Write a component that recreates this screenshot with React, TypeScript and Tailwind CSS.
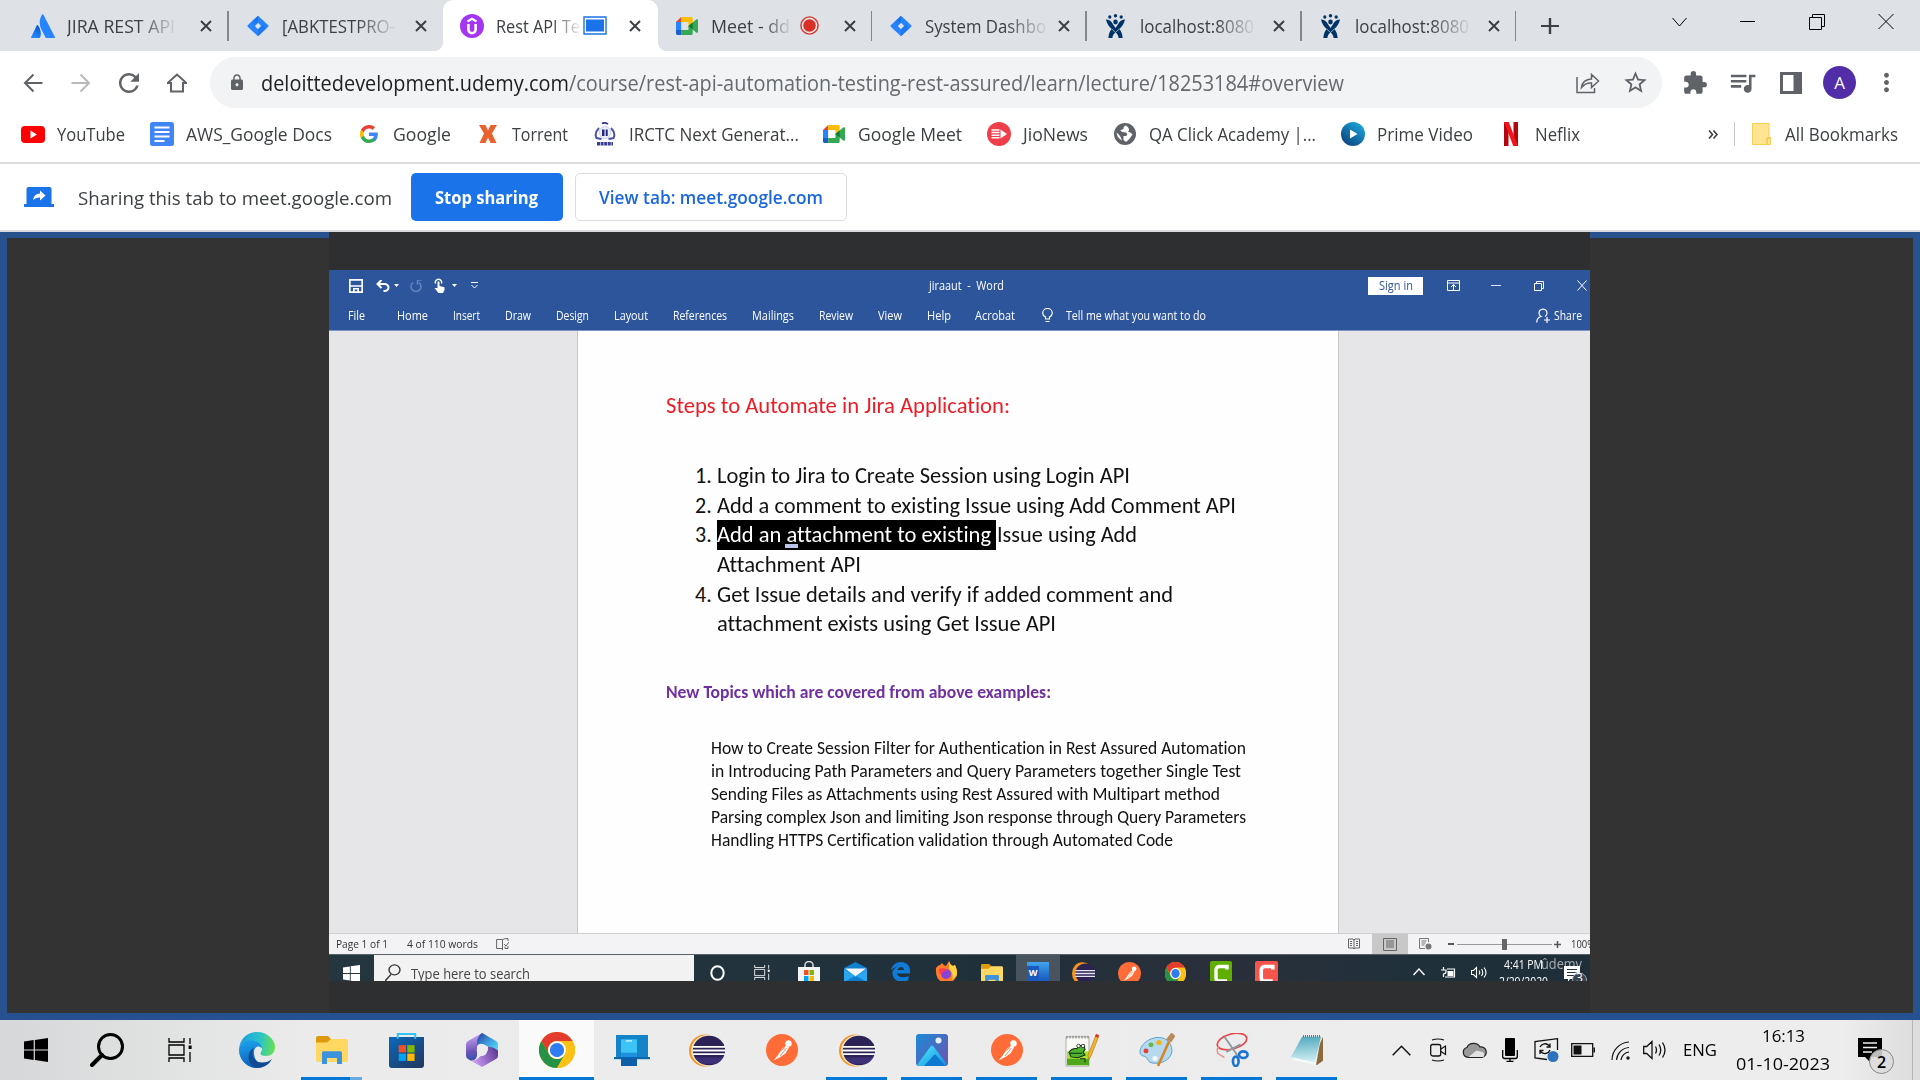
import React, { useLayoutEffect, useRef, ReactNode } from "react";
import { MdLock, MdExtension, MdQueueMusic, MdStarBorder, MdMoreVert, MdRefresh } from "react-icons/md";

type P = { className?: string };

/* Single-line label condensed or widened to fill the width its class gives it. */
function Fit({ className = "", children }: { className?: string; children: ReactNode }) {
  const outer = useRef<HTMLSpanElement>(null);
  const inner = useRef<HTMLSpanElement>(null);
  useLayoutEffect(() => {
    const o = outer.current, i = inner.current;
    if (!o || !i) return;
    i.style.transform = "none";
    const k = o.getBoundingClientRect().width / i.getBoundingClientRect().width;
    i.style.transform = `scaleX(${k})`;
  });
  return (
    <span ref={outer} className={"block shrink-0 whitespace-nowrap " + className}>
      <span ref={inner} className="inline-block origin-left">{children}</span>
    </span>
  );
}

const Svg = ({ className = "", box = "0 0 24 24", children }: { className?: string; box?: string; children: ReactNode }) => (
  <svg className={"block shrink-0 " + className} viewBox={box} fill="none" preserveAspectRatio="none">{children}</svg>
);

/* ---------- brand icons ---------- */
const Atlassian = ({ className }: P) => (
  <Svg className={className}>
    <defs><linearGradient id="atl" x1="11" y1="12" x2="4" y2="23" gradientUnits="userSpaceOnUse"><stop stopColor="#0052cc" /><stop offset="1" stopColor="#2684ff" /></linearGradient></defs>
    <path d="M7 11.4c-.4-.5-1-.4-1.300.100L.1 23.200c-.2.400.100.800.600.800h7.700c.3 0 .5-.1.600-.4 1.700-3.500.7-8.700-2-12.200Z" fill="url(#atl)" />
    <path d="M11.100.5C8 5.400 8.200 10.800 10.200 14.900l4.300 8.700c.1.200.4.400.7.400H23.400c.5 0 .8-.4.600-.8L12.300.5c-.3-.5-.9-.5-1.200 0Z" fill="#2684ff" />
  </Svg>
);
const JiraDiamond = ({ className }: P) => (
  <Svg className={className}>
    <defs><linearGradient id="jd" x1="12" y1="2" x2="5" y2="10" gradientUnits="userSpaceOnUse"><stop stopColor="#0052cc" /><stop offset="1" stopColor="#2684ff" /></linearGradient></defs>
    <path d="M12 .8 23.200 11.300c.4.400.4 1 0 1.400L12 23.200.800 12.700c-.4-.4-.4-1 0-1.400L12 .8Zm0 7.700L8.500 12l3.500 3.500 3.500-3.500L12 8.500Z" fill="#2684ff" fillRule="evenodd" />
    <path d="M12 .8v7.700L6.500 14 3.300 9Z" fill="url(#jd)" opacity=".5" />
    <path d="M12 23.200v-7.700l5.500-5.500 3.200 5Z" fill="#1a6fe8" opacity=".6" />
  </Svg>
);
const UdemyBadge = ({ className }: P) => (
  <Svg className={className}>
    <circle cx="12" cy="12" r="12" fill="#a435f0" />
    <path d="M7.500 7.500 12 4.800 16.500 7.500" stroke="#fff" strokeWidth="2.200" />
    <path d="M8.400 10v5.500a3.600 3.700 0 0 0 7.200 0V10" stroke="#fff" strokeWidth="2.600" />
  </Svg>
);
const MeetIcon = ({ className }: P) => (
  <Svg className={className} box="0 0 24 20">
    <path d="M0 5.500 5.600 0v5.500Z" fill="#ea4335" />
    <path d="M5.600 0H16.500c1 0 1.700.7 1.700 1.700V8l-4.600 3V5.500h-8Z" fill="#fbbc04" />
    <path d="M0 5.500h5.600v9H0Z" fill="#2684fc" />
    <path d="M0 14.500h5.600V20H1.700C.7 20 0 19.300 0 18.300Z" fill="#1a5fd0" />
    <path d="M5.600 14.500h8V10l4.600-2.500v10.800c0 1-.7 1.700-1.700 1.700H5.600Z" fill="#34a853" />
    <path d="m13.600 10 8.800-7.400c.6-.5 1.600-.1 1.600.7v13.400c0 .8-1 1.200-1.600.7Z" fill="#34a853" />
    <path d="m13.600 10 4.600-3.900v7.800Z" fill="#0f7a35" />
  </Svg>
);
const JiraPerson = ({ className }: P) => (
  <Svg className={className} box="0 0 20 24">
    <g fill="#003366">
      <circle cx="4" cy="3" r="1.700" /><circle cx="10" cy="1.800" r="1.800" /><circle cx="16" cy="3" r="1.700" />
      <path d="M0 5.600c3.500-.3 6 2 7.500 5l2.500 3.500 2.500-3.500c1.500-3 4-5.300 7.500-5-1 4.200-3.300 7.400-6 9.400 2 2 3.300 5 3.500 9h-4.200c-.2-2.600-1.500-4.500-3.300-5.500-1.800 1-3.100 2.900-3.300 5.500H2.500c.2-4 1.500-7 3.500-9-2.700-2-5-5.200-6-9.400Z" />
      <circle cx="10" cy="8" r="2.400" />
    </g>
    <path d="m6 15 4 3.500 4-3.500" stroke="#dee1e6" strokeWidth=".7" />
  </Svg>
);
const Chrome = ({ className }: P) => (
  <Svg className={className} box="0 0 48 48">
    <circle cx="24" cy="24" r="24" fill="#fbbc04" />
    <path d="M3.200 12A24 24 0 0 1 44.800 12H24A12 12 0 0 0 13.600 30Z" fill="#e33b2e" />
    <path d="M3.200 12A24 24 0 0 0 24 48L34.400 30A12 12 0 0 1 13.600 30Z" fill="#259245" />
    <path d="M44.800 12H24a12 12 0 0 1 10.400 18L24 48A24 24 0 0 0 44.800 12Z" fill="#fbc116" />
    <circle cx="24" cy="24" r="12" fill="#fff" /><circle cx="24" cy="24" r="9.500" fill="#2f7cf0" />
  </Svg>
);
const Eclipse = ({ className }: P) => (
  <Svg className={className} box="0 0 36 36">
    <ellipse cx="16" cy="18" rx="16" ry="17.500" fill="#f7941e" />
    <ellipse cx="20" cy="18" rx="18" ry="17.500" fill="#f3ead9" opacity=".9" clipPath="inset(0 16px 0 0)" />
    <circle cx="20" cy="18" r="16.200" fill="#2c2255" />
    <path d="M6 25.500h28.500a16 16 0 0 1-7 7H13Z" fill="#473788" opacity=".7" />
    <path d="M4 14H36M3.500 18h32.500M4 22H36" stroke="#fff" strokeWidth="2" />
  </Svg>
);
const DarkEclipse = ({ className }: P) => (
  <Svg className={className} box="0 0 36 36">
    <ellipse cx="16" cy="18" rx="16" ry="17.500" fill="#f7941e" />
    <circle cx="20.500" cy="18" r="15.500" fill="#2c2255" />
    <path d="M5 13.500H36M4.500 18h31.500M5 22.500H36" stroke="#e8e4f4" strokeWidth="2.200" />
  </Svg>
);
const Postman = ({ className }: P) => (
  <Svg className={className} box="0 0 32 32">
    <circle cx="16" cy="16" r="16" fill="#ff6c37" />
    <circle cx="22.500" cy="9.500" r="3.200" fill="#fff" />
    <path d="m20.500 11.500 2.500 2-3.500 6-5.200 3.500-6.800 3.500 4.200-5 4-6.500Z" fill="#fff" />
    <path d="m12 19 7-5.500M14 22l6.500-8" stroke="#ff6c37" strokeWidth=".8" />
  </Svg>
);
const Folder = ({ className }: P) => (
  <Svg className={className} box="0 0 32 28">
    <path d="M0 2c0-1 .6-2 2-2h10l3 3v5H0Z" fill="#dd9a0a" />
    <path d="M0 6.500h11L15 3h15c1 0 2 1 2 2v19c0 1-1 2-2 2H2c-1 0-2-1-2-2Z" fill="#ffd763" />
    <path d="M6 28V17c0-1 .7-1.700 1.700-1.700h16.600c1 0 1.700.7 1.700 1.700v11h-5v-6H11v6Z" fill="#3c93dc" />
  </Svg>
);
const Windows = ({ className }: P) => (
  <Svg className={className}><path d="M0 3.400 9.700 2.100v9.300H0ZM10.900 1.900 24 0v11.400H10.900ZM0 12.600h9.700v9.300L0 20.600ZM10.900 12.600H24V24l-13.100-1.900Z" fill="currentColor" /></Svg>
);
const TaskView = ({ className }: P) => (
  <Svg className={className} box="0 0 24 24">
    <path d="M1 0v4h15V0M1 7h15v10H1ZM1 24v-4h15v4M22 0v6M22 14v10" stroke="currentColor" strokeWidth="1.300" /><path d="M20.600 7.500h3v3.500h-3Z" fill="currentColor" />
  </Svg>
);
const EdgeIcon = ({ className }: P) => (
  <Svg className={className} box="0 0 36 36">
    <defs>
      <linearGradient id="eg1" x1="2" y1="10" x2="36" y2="14" gradientUnits="userSpaceOnUse"><stop stopColor="#1ba2e0" /><stop offset=".55" stopColor="#2bc4c9" /><stop offset="1" stopColor="#6be14b" /></linearGradient>
      <linearGradient id="eg2" x1="4" y1="12" x2="10" y2="36" gradientUnits="userSpaceOnUse"><stop stopColor="#1a9be8" /><stop offset="1" stopColor="#0a5fb8" /></linearGradient>
    </defs>
    <path d="M0 17C1 7 8 0 18 0c11 0 18 8 18 15 0 6-4 9-9 9-4 0-6-1.500-5.500-3 .5-1.200 1.500-2 1.500-4 0-5-5-8-10.500-8C6 9 1 12 0 17Z" fill="url(#eg1)" />
    <path d="M0 18c0-5 5-9.500 12-9.500 6 0 10.500 3 11 7.500-4-3.500-8-1-8 4.500S18 32 24 34c-1.500 1.200-4 2-6 2A18 18 0 0 1 0 18Z" fill="url(#eg2)" />
    <path d="M15 15.500c-4 8 1 15 8 15 4 0 7.500-1 10-3.500-3 6-9 9-15 9C9 34 6 21 15 15.500Z" fill="#114a92" />
  </Svg>
);
const StoreIcon = ({ className }: P) => (
  <Svg className={className} box="0 0 36 36">
    <defs><linearGradient id="st" x1="6" y1="4" x2="30" y2="36" gradientUnits="userSpaceOnUse"><stop stopColor="#0b65b3" /><stop offset="1" stopColor="#233a63" /></linearGradient></defs>
    <path d="M0 4h36v29a3 3 0 0 1-3 3H3a3 3 0 0 1-3-3Z" fill="url(#st)" />
    <path d="M9 6V1h18v5" stroke="#2fc6f5" strokeWidth="2" />
    <path d="M10 12.500h7.500v7.500H10Z" fill="#f25022" /><path d="M18.800 12.500h7.500v7.500h-7.500Z" fill="#7fba00" /><path d="M10 21.200h7.500v7.500H10Z" fill="#00a4ef" /><path d="M18.800 21.200h7.500v7.500h-7.500Z" fill="#ffb900" />
  </Svg>
);
const M365 = ({ className }: P) => (
  <Svg className={className} box="0 0 32 36">
    <defs>
      <linearGradient id="m1" x1="3" y1="4" x2="8" y2="30" gradientUnits="userSpaceOnUse"><stop stopColor="#c39af0" /><stop offset=".6" stopColor="#6a55b5" /><stop offset="1" stopColor="#2b53b0" /></linearGradient>
      <linearGradient id="m2" x1="12" y1="3" x2="30" y2="20" gradientUnits="userSpaceOnUse"><stop stopColor="#2a4aa8" /><stop offset=".5" stopColor="#3d9fe0" /><stop offset="1" stopColor="#55e0f5" /></linearGradient>
      <linearGradient id="m3" x1="8" y1="32" x2="32" y2="20" gradientUnits="userSpaceOnUse"><stop stopColor="#cf9bf5" /><stop offset="1" stopColor="#5b3a94" /></linearGradient>
    </defs>
    <path d="M16 0 2 8.500Q0 9.700 0 12v12q0 2.300 2 3.500L5 29.500q6-1 6-6V12Q12 5 20 2Z" fill="url(#m1)" />
    <path d="m16 0 14 8.500Q32 9.700 32 12v11q-3-4-8-7-4-3.500-9-4.500-3 0-4 3V9Q12 3 16 0Z" fill="url(#m2)" />
    <path d="M32 19v5q0 2.300-2 3.500L16 36 5 29.500q6 0 9-4.500 9-3 8-10.500 8 1 10 4.500Z" fill="url(#m3)" />
    <ellipse cx="16" cy="18" rx="5.300" ry="6.300" fill="#ececec" />
  </Svg>
);
const PhoneLink = ({ className }: P) => (
  <Svg className={className} box="0 0 36 36">
    <path d="M2 1h32v26h2v1.500H0V27h2Z" fill="#1583c7" /><path d="M0 26h36v2H0Z" fill="#0f69a8" />
    <path d="M7 6h16v21H7Z" fill="#3cc4f5" /><path d="M7 22h16v14H7Z" fill="#0c5fa8" /><path d="M7 21h16v5H7Z" fill="#1f8fe0" /><path d="M12 7h6v1.500h-6Z" fill="#d4f2ff" />
  </Svg>
);
const Photos = ({ className }: P) => (
  <Svg className={className} box="0 0 32 32">
    <defs>
      <linearGradient id="ph" x1="0" y1="0" x2="32" y2="28" gradientUnits="userSpaceOnUse"><stop stopColor="#1b8ad8" /><stop offset="1" stopColor="#6b55b0" /></linearGradient>
      <linearGradient id="ph2" x1="14" y1="13" x2="28" y2="32" gradientUnits="userSpaceOnUse"><stop stopColor="#3fd3f8" /><stop offset="1" stopColor="#1690dd" /></linearGradient>
    </defs>
    <rect width="32" height="32" rx="3" fill="url(#ph)" /><circle cx="22.500" cy="6.500" r="3" fill="#e6f0fa" />
    <path d="M1 31 14.500 12.500q1.500-2 3 0L31 30q-1 2-3 2H3Z" fill="url(#ph2)" /><path d="m8 32 10-11q1-1 2 0l9 11Z" fill="#0e78d0" />
  </Svg>
);
const NotepadPP = ({ className }: P) => (
  <Svg className={className} box="0 0 34 36">
    <path d="M1 3h23v32H1Z" fill="#f8f8f5" stroke="#aaa" />
    <path d="M2 19h22v15H2Z" fill="#a8e02a" /><path d="M2 27h22v7H2Z" fill="#4fa81c" />
    <path d="M2 2v3M5 2v3M8 2v3M11 2v3M14 2v3M17 2v3M20 2v3M23 2v3" stroke="#777" />
    <path d="M4 20q3-5 8-4l2-4 3 1 2-1 1 5-2 3 2 3-7 3-7-1Z" fill="#4db52c" stroke="#162a10" strokeWidth="1.100" /><circle cx="13.500" cy="13" r="1.800" fill="#fff" stroke="#000" strokeWidth=".7" /><circle cx="18" cy="13" r="1.800" fill="#fff" stroke="#000" strokeWidth=".7" />
    <path d="M5 21h12M15 27h5v4" stroke="#123" /><path d="m31 1 3 1-8 22-2 4-1-5Z" fill="#f4b52a" stroke="#a66a12" strokeWidth=".6" /><path d="m31 0 3 1-1 3-3-1Z" fill="#d33" />
  </Svg>
);
const Paint = ({ className }: P) => (
  <Svg className={className} box="0 0 36 36">
    <path d="M16 5C7 7 1 14 1 20c0 4 3 4 5 5 3 1 2 4 5 6 6 3 21 0 22-12C33 9 25 3 16 5Z" fill="#b5daf0" stroke="#5c9fc8" />
    <circle cx="7" cy="19" r="2.500" fill="#e83f38" /><circle cx="12" cy="12.500" r="2.500" fill="#63b944" /><circle cx="20" cy="10" r="2.700" fill="#f2b21c" /><circle cx="16" cy="27" r="2.600" fill="#f4f8fb" />
    <path d="M19 35 30 9" stroke="#d98323" strokeWidth="2.600" /><path d="m27 7 5-7q4 1 4 4l-4 6Z" fill="#b98b5c" />
  </Svg>
);
const Snip = ({ className }: P) => (
  <Svg className={className} box="0 0 36 36">
    <ellipse cx="18" cy="9" rx="16" ry="8" transform="rotate(-15 18 9)" stroke="#e8474b" strokeWidth="1.800" />
    <path d="M4 14q-4 6 1 9l5 3" stroke="#ef8d8d" strokeWidth="1.500" />
    <path d="m10 4 14 20M27 12 12 20" stroke="#8d99a3" strokeWidth="2" />
    <ellipse cx="30" cy="23" rx="4.500" ry="3.500" stroke="#1d74d0" strokeWidth="2.800" /><ellipse cx="22" cy="30" rx="3" ry="5" stroke="#1d74d0" strokeWidth="2.800" />
  </Svg>
);
const Notepad = ({ className }: P) => (
  <Svg className={className} box="0 0 32 36">
    <defs><linearGradient id="np" x1="14" y1="2" x2="16" y2="32" gradientUnits="userSpaceOnUse"><stop stopColor="#4fa9bd" /><stop offset="1" stopColor="#d5f0f6" /></linearGradient></defs>
    <path d="M32 3v27l-6 5-6-2Z" fill="#8b6b3c" /><path d="M30 3 25 35 1 29Z" fill="#f5fafa" />
    <path d="M11 3h19l-6 29-24-6Z" fill="url(#np)" /><path d="M12 2.500h18" stroke="#777" strokeWidth="3" strokeDasharray="1 1" />
  </Svg>
);

/* ---------- tab strip ---------- */
const Cross = () => <Svg className="w-3 h-3" box="0 0 12 12"><path d="m1 1 10 10M11 1 1 11" stroke="#3c4043" strokeWidth="2" /></Svg>;

const tabs: { icon: ReactNode; label: string; w: string; badge?: ReactNode; active?: boolean; line?: boolean }[] = [
  { icon: <Atlassian className="w-6 h-6" />, label: "JIRA REST API", w: "w-[108px]", line: true },
  { icon: <JiraDiamond className="w-[22px] h-[22px]" />, label: "[ABKTESTPRO-", w: "w-[113px]" },
  {
    icon: <UdemyBadge className="w-6 h-6" />, label: "Rest API Te", w: "w-[84px]", active: true,
    badge: <Svg className="ml-[3px] w-6 h-[19px]" box="0 0 24 19"><path d="M1 1h22v17H1Z" stroke="#1a73e8" strokeWidth="1.400" /><path d="M3 3.500h18v12H3Z" fill="#1a73e8" /></Svg>,
  },
  {
    icon: <MeetIcon className="w-[22px] h-[18px]" />, label: "Meet - dd", w: "w-[79px]", line: true,
    badge: <Svg className="ml-[10px] w-[19px] h-[19px]" box="0 0 19 19"><circle cx="9.500" cy="9.500" r="8.600" stroke="#d93025" strokeWidth="1.400" /><circle cx="9.500" cy="9.500" r="6.200" fill="#d93025" /></Svg>,
  },
  { icon: <JiraDiamond className="w-[22px] h-[22px]" />, label: "System Dashbo", w: "w-[121px]", line: true },
  { icon: <JiraPerson className="w-[19px] h-6" />, label: "localhost:8080", w: "w-[114px]", line: true },
  { icon: <JiraPerson className="w-[19px] h-6" />, label: "localhost:8080", w: "w-[114px]", line: true },
];

function TabStrip() {
  return (
    <div className="flex h-[51px] shrink-0 bg-[#dee1e6] pl-[14px] text-[#3c4043]">
      {tabs.map((t, i) => (
        <div key={i} className={"relative flex h-full w-[214.6px] shrink-0 items-center " + (t.active ? "rounded-t-[10px] bg-white" : "")}>
          {t.active && (
            <>
              <span className="absolute -left-2 bottom-0 h-2 w-2 bg-[radial-gradient(circle_at_0_0,transparent_7.5px,white_8px)]" />
              <span className="absolute -right-2 bottom-0 h-2 w-2 bg-[radial-gradient(circle_at_100%_0,transparent_7.5px,white_8px)]" />
            </>
          )}
          <span className="ml-[17px] flex w-6 justify-center">{t.icon}</span>
          <div className="ml-3 flex w-[113px] items-center">
            <Fit className={t.w + " text-[18px] leading-6 [mask-image:linear-gradient(to_right,black_66%,transparent_103%)]"}>{t.label}</Fit>
            {t.badge}
          </div>
          <span className="ml-5"><Cross /></span>
          {t.line && <span className="ml-auto h-[30px] w-[1.500px] bg-[#84878b]" />}
        </div>
      ))}
      <div className="ml-[24px] flex w-5 items-center"><Svg className="h-[18px] w-5" box="0 0 20 20"><path d="M10 1v18M1 10h18" stroke="#3c4043" strokeWidth="2.400" /></Svg></div>
      <div className="ml-[112px] flex h-[43px] items-center text-black">
        <Svg className="h-[10px] w-[15px]" box="0 0 15 10"><path d="m.5 1 7 8 7-8" stroke="currentColor" /></Svg>
        <span className="ml-[53px] h-px w-[15px] bg-black" />
        <Svg className="ml-[54px] h-4 w-4" box="0 0 16 16"><path d="M.5 3.500h12v12H.5ZM3.500 3.500v-3h12v12h-3" stroke="currentColor" /></Svg>
        <Svg className="ml-[53px] h-[15px] w-4" box="0 0 16 15"><path d="m.5 0 15 15M15.500 0l-15 15" stroke="currentColor" /></Svg>
      </div>
    </div>
  );
}

/* ---------- address bar ---------- */
function AddressBar() {
  return (
    <div className="flex h-[63px] shrink-0 items-center pl-[23px] text-[#5f6368]">
      <Svg className="h-5 w-5" box="0 0 20 20"><path d="M19.500 10H2M10.500 1.500 2 10l8.500 8.500" stroke="currentColor" strokeWidth="2" /></Svg>
      <Svg className="ml-[28px] h-5 w-5 text-[#b8babd]" box="0 0 20 20"><path d="M.5 10H18M9.500 1.500 18 10l-8.500 8.500" stroke="currentColor" strokeWidth="2" /></Svg>
      <MdRefresh className="ml-[23px] h-[30px] w-[30px]" />
      <Svg className="ml-[23px] h-5 w-5" box="0 0 20 20"><path d="M0.700 10 10 1.500 19.300 10H16v8.500H4V10Z" stroke="currentColor" strokeWidth="2" /></Svg>
      <div className="ml-[23px] flex h-[51px] w-[1452px] shrink-0 items-center rounded-full bg-[#f1f3f4] pl-[18px]">
        <MdLock className="h-[19px] w-[18px]" />
        <Fit className="ml-[15px] w-[1083px] text-[21px] leading-7 text-[#66696d]"><span className="text-[#202124]">deloittedevelopment.udemy.com</span>/course/rest-api-automation-testing-rest-assured/learn/lecture/18253184#overview</Fit>
        <Svg className="ml-[232px] h-[22px] w-6" box="0 0 24 22"><path d="M1 5v15.500h17.500v-4.500M5.500 15.500q1-8 10-8.500V2.500L22.500 9l-7 6.500V11q-6-.5-10 4.500Z" stroke="currentColor" strokeWidth="1.500" /></Svg>
        <MdStarBorder className="ml-[22px] h-[27px] w-[27px]" />
      </div>
      <MdExtension className="ml-[20px] h-[26px] w-[26px]" />
      <MdQueueMusic className="ml-[19px] h-[31px] w-[31px]" />
      <Svg className="ml-[22px] h-[22px] w-[22px]" box="0 0 22 22"><path d="M1.500 1.500h19v19h-19Z" stroke="currentColor" strokeWidth="3" /><path d="M13.500 1h7v20h-7Z" fill="currentColor" /></Svg>
      <span className="ml-[21px] flex h-[33px] w-[33px] items-center justify-center rounded-full bg-[#512da8] text-[17px] text-white">A</span>
      <MdMoreVert className="ml-[16px] h-[29px] w-[29px]" />
    </div>
  );
}

/* ---------- bookmarks ---------- */
function Mark({ icon, w, ml, children }: { icon: ReactNode; w: string; ml: string; children: string }) {
  return (
    <div className={"flex shrink-0 items-center " + ml}>
      <span className="flex w-6 justify-center">{icon}</span>
      <Fit className={"ml-3 text-[18px] leading-6 " + w}>{children}</Fit>
    </div>
  );
}

function Bookmarks() {
  return (
    <div className="flex h-[50px] shrink-0 items-center border-b-2 border-[#dadada] pb-[8px] text-[#3c4043]">
      <Mark ml="ml-[21px]" w="w-[68px]" icon={<Svg className="h-[17px] w-6" box="0 0 24 17"><rect width="24" height="17" rx="4" fill="#f00" /><path d="m9.500 4.500 6.500 4-6.500 4Z" fill="#fff" /></Svg>}>YouTube</Mark>
      <Mark ml="ml-[25px]" w="w-[146px]" icon={<Svg className="h-6 w-6"><rect width="24" height="24" rx="2.500" fill="#4285f4" /><path d="M4.500 5.500h15M4.500 10h15M4.500 14.500h15M4.500 19h10" stroke="#fff" strokeWidth="2" /></Svg>}>AWS_Google Docs</Mark>
      <Mark ml="ml-[25px]" w="w-[58px]" icon={
        <Svg className="h-[18px] w-[18px]" box="2 2 20 20"><path d="M21.800 12.200c0-.7-.1-1.400-.2-2H12v3.900h5.500a4.700 4.700 0 0 1-2 3.100v2.600h3.300c1.900-1.800 3-4.400 3-7.600Z" fill="#4285f4" /><path d="M12 22c2.700 0 5-.9 6.800-2.400l-3.300-2.600c-.9.600-2 1-3.500 1a6 6 0 0 1-5.600-4.100H3v2.600A10 10 0 0 0 12 22Z" fill="#34a853" /><path d="M6.400 13.900a6 6 0 0 1 0-3.800V7.500H3a10 10 0 0 0 0 9Z" fill="#fbbc05" /><path d="M12 6c1.500 0 2.800.5 3.800 1.500l2.900-2.900A10 10 0 0 0 3 7.500l3.400 2.600A6 6 0 0 1 12 6Z" fill="#ea4335" /></Svg>}>Google</Mark>
      <Mark ml="ml-[25px]" w="w-[56px]" icon={<Svg className="h-[18px] w-[18px]" box="0 0 18 18"><path d="M0 0h6.500L9 5.500 11.500 0H18l-5 8.500 4.500 9.500h-6L9 12.500 6.500 18h-6L5 8.500Z" fill="#e8622e" /></Svg>}>Torrent</Mark>
      <Mark ml="ml-[25px]" w="w-[170px]" icon={<Svg className="h-6 w-[22px]" box="0 0 22 24"><path d="M8 1.500q3-1.500 6 .5" stroke="#30398f" strokeWidth="1.800" /><path d="M5 6Q0 11 2.500 16l5 1M17 6q5 5 2.500 10l-5 1" stroke="#4a55a8" strokeWidth="2" /><ellipse cx="11" cy="10.500" rx="5.500" ry="6" fill="#eef0fa" stroke="#c9cdec" /><path d="M8 7.500h2.500v6.500H8ZM11.700 7.500h2v6.500h-2Z" fill="#22277f" /><path d="M3 21.800h16" stroke="#3a3f93" strokeWidth="3.400" strokeDasharray="3 .6" /></Svg>}>IRCTC Next Generat...</Mark>
      <Mark ml="ml-[23px]" w="w-[104px]" icon={<MeetIcon className="h-[18px] w-[22px]" />}>Google Meet</Mark>
      <Mark ml="ml-[25px]" w="w-[65px]" icon={<Svg className="h-6 w-6"><circle cx="12" cy="12" r="12" fill="#ef3f4a" /><path d="M4.500 8h8M4.500 10.600h8M4.500 13.200h8M4.500 15.800h8" stroke="#fff" strokeWidth="1.500" /><path d="m13.500 7.500 6.500 4.500-6.500 4.500Z" fill="#fff" /></Svg>}>JioNews</Mark>
      <Mark ml="ml-[25px]" w="w-[167px]" icon={<Svg className="h-[22px] w-[22px]" box="0 0 22 22"><circle cx="11" cy="11" r="11" fill="#5f6368" /><path d="M12 2.500q-3 1-2.500 3.500L6 7.500q2 2 6 2 2.500 2 0 3.500H9.500v4L12 19q4-3 6.500-7.500-2-3-4.500-2.500 3-3-2-6.500ZM2.500 9.500Q3 15 8 17.500 7 13 2.500 9.500Z" fill="#fff" /></Svg>}>QA Click Academy |...</Mark>
      <Mark ml="ml-[25px]" w="w-[96px]" icon={<Svg className="h-6 w-6"><defs><linearGradient id="pv" x1="18" y1="2" x2="4" y2="20" gradientUnits="userSpaceOnUse"><stop stopColor="#1a9fd4" /><stop offset="1" stopColor="#0d4b85" /></linearGradient></defs><circle cx="12" cy="12" r="12" fill="url(#pv)" /><path d="m9 7.500 7.500 4.500L9 16.500Z" fill="#fff" /></Svg>}>Prime Video</Mark>
      <Mark ml="ml-[26px]" w="w-[45px]" icon={<Svg className="h-6 w-[14px]" box="0 0 14 24"><path d="M0 0h4.500v24H0ZM9.500 0H14v24H9.500Z" fill="#b1060f" /><path d="M0 0h4.700L14 24H9.300Z" fill="#f0141e" /></Svg>}>Neflix</Mark>
      <Svg className="ml-[128px] h-[9px] w-[10px]" box="0 0 10 9"><path d="m1 .5 3.500 4L1 8.500M5.500.5l3.500 4-3.500 4" stroke="#3c4043" strokeWidth="1.600" /></Svg>
      <span className="ml-4 h-6 w-px bg-[#c6c8ca]" />
      <Mark ml="ml-[14px]" w="w-[113px]" icon={<Svg className="h-[22px] w-[19px]" box="0 0 19 22"><path d="M.5.500h16.500v14H18.500v7H.5Z" fill="#ffe591" stroke="#f6cf52" /><path d="M15 21v-6h3" stroke="#ebb92c" /></Svg>}>All Bookmarks</Mark>
    </div>
  );
}

function SharingBar() {
  return (
    <div className="flex h-[68px] shrink-0 items-center border-b-2 border-[#dadce0] pl-[24px]">
      <Svg className="h-5 w-[30px]" box="0 0 30 20"><path d="M2.500 2q0-2 2-2h21q2 0 2 2v15H30v3H0v-3h2.500Z" fill="#1a73e8" /><path d="M9 13q1-6.500 7-6.500V3.500l5.500 5-5.500 5v-3q-4-.5-7 2.500Z" fill="#fff" /></Svg>
      <Fit className="ml-[24px] mt-[2px] w-[314px] text-[19px] leading-7 text-[#3c4043]">Sharing this tab to meet.google.com</Fit>
      <button className="ml-[19px] flex h-[48px] w-[152px] items-center justify-center rounded-[5px] bg-[#1a73e8] pr-[2px] text-[18px] font-bold text-white"><Fit className="w-[103px]">Stop sharing</Fit></button>
      <button className="ml-[12px] flex h-[48px] w-[272px] items-center justify-center rounded-[5px] border border-[#dadce0] text-[18px] font-semibold text-[#1a66dc]"><Fit className="w-[224px]">View tab: meet.google.com</Fit></button>
    </div>
  );
}

/* ---------- Word window in the shared lecture ---------- */
const ribbon: [string, string, string][] = [
  ["File", "ml-[19px]", "w-[17px]"], ["Home", "ml-[32px]", "w-[31px]"], ["Insert", "ml-[25px]", "w-[27px]"],
  ["Draw", "ml-[25px]", "w-[26px]"], ["Design", "ml-[25px]", "w-[33px]"], ["Layout", "ml-[25px]", "w-[34px]"],
  ["References", "ml-[25px]", "w-[54px]"], ["Mailings", "ml-[25px]", "w-[42px]"], ["Review", "ml-[25px]", "w-[34px]"],
  ["View", "ml-[25px]", "w-[24px]"], ["Help", "ml-[25px]", "w-[24px]"], ["Acrobat", "ml-[24px]", "w-[40px]"],
];

const Caret = ({ className }: P) => <Svg className={"h-[3px] w-[5px] " + className} box="0 0 5 3"><path d="M0 0h5L2.500 3Z" fill="currentColor" /></Svg>;

function WordHeader() {
  return (
    <div className="h-[61px] shrink-0 border-b border-[#7c95c4] bg-[#2d559b] text-[12px] font-medium leading-4 text-white">
      <div className="flex h-[31px] items-center pl-5">
        <Svg className="mt-[1px] h-[14px] w-[14px]" box="0 0 13 13"><path d="M.8.800h11.400v11.400H.8Z" stroke="#fff" strokeWidth="1.500" /><path d="M1 6.500h11M4.500 12.500V9h4v3.500" stroke="#fff" strokeWidth="1.500" /></Svg>
        <Svg className="ml-[13px] h-3 w-[14px]" box="0 0 14 12"><path d="M5.500 0 1.500 4l4 4M2 4h6.500a4 3.500 0 0 1 0 7H7.500" stroke="#fff" strokeWidth="2" /></Svg>
        <Caret className="ml-[4px]" />
        <Svg className="ml-[11px] h-3 w-3" box="0 0 12 12"><path d="M3 2.500a5 5 0 1 0 6 0M11.500 0H7.500v4.500" stroke="#6685bd" strokeWidth="1.500" /></Svg>
        <Svg className="ml-[12px] h-[15px] w-[11px]" box="0 0 11 15"><path d="M1.500 5.500a3.200 3.200 0 1 1 6 0" stroke="#fff" strokeWidth="1.500" /><path d="M3.500 4q1-1.500 2 0v4l5 1.200V12l-1.500 3H4.500L.5 10h3Z" fill="#fff" /></Svg>
        <Caret className="ml-[7px]" />
        <Svg className="ml-[14px] h-[7px] w-[7px]" box="0 0 7 7"><path d="M0 .5h7M.5 3l3 3 3-3" stroke="#fff" /></Svg>
        <Fit className="ml-[451px] w-[75px]">jiraaut&nbsp; -&nbsp; Word</Fit>
        <span className="ml-[364px] flex h-[18px] w-[55px] items-center justify-center bg-white text-[#2d559b]"><Fit className="w-[34px]">Sign in</Fit></span>
        <Svg className="ml-[24px] h-[11px] w-[13px]" box="0 0 13 11"><path d="M.5.500h12v10H.5ZM.5 3h12M6.500 10V4.500M4 7l2.500-2.500L9 7" stroke="#fff" /></Svg>
        <span className="ml-[31px] h-[1.500px] w-[10px] bg-[#dce4f2]" />
        <Svg className="ml-[33px] h-[10px] w-[10px]" box="0 0 10 10"><path d="M.5 2.500h7v7h-7ZM2.500 2V.5h7v7H8" stroke="#fff" /></Svg>
        <Svg className="ml-[33px] h-[11px] w-[10px]" box="0 0 10 11"><path d="m.5.500 9 10M9.500.500l-9 10" stroke="#fff" /></Svg>
      </div>
      <div className="flex h-[29px] items-center">
        {ribbon.map(([name, ml, w]) => <Fit key={name} className={ml + " " + w}>{name}</Fit>)}
        <Svg className="ml-[27px] h-[15px] w-[11px]" box="0 0 11 15"><path d="M3.500 11V9Q.7 7.500.7 5a4.800 4.500 0 0 1 9.600 0q0 2.500-2.800 4v2ZM3.500 13.500h4" stroke="#fff" strokeWidth="1.200" /></Svg>
        <Fit className="ml-[13px] w-[140px]">Tell me what you want to do</Fit>
        <Svg className="ml-[330px] h-[15px] w-[14px]" box="0 0 14 15"><path d="M.7 14.500Q1 9.500 5 8.500a4 4 0 1 1 4 0M8 12h6M11 9v6" stroke="#fff" strokeWidth="1.200" /></Svg>
        <Fit className="ml-1 w-[28px]">Share</Fit>
      </div>
    </div>
  );
}

const Step = ({ n, w, children }: { n?: string; w: string; children: ReactNode }) => (
  <div className="flex h-[29.600px] items-center">
    <span className="w-[22px] shrink-0">{n}</span>
    <Fit className={w}>{children}</Fit>
  </div>
);

function Page() {
  return (
    <div className="h-[602px] w-[762px] border-x border-[#c9c9cb] bg-[#fefefe] pl-[88px] pt-[62px] font-[Carlito,Lato,sans-serif] text-[#111] [font-variant-ligatures:none]">
      <Fit className="h-[26px] w-[344px] text-[22px] leading-[26px] text-[#ee1c25]">Steps to Automate in Jira Application:</Fit>
      <div className="mt-[42px] pl-[29px] text-[22px] leading-[29px]">
        <Step n="1." w="w-[413px]">Login to Jira to Create Session using Login API</Step>
        <Step n="2." w="w-[519px]">Add a comment to existing Issue using Add Comment API</Step>
        <div className="flex h-[29.600px] items-center">
          <span className="w-[22px] shrink-0">3.</span>
          <div className="relative h-[29.600px] w-[279px] shrink-0 bg-black text-white">
            <Fit className="w-[274px]">Add an attachment to existing</Fit>
            <span className="absolute bottom-[2px] left-[68px] h-1 w-[13px] bg-[#b9c6ea]" />
          </div>
          <Fit className="ml-px w-[140px]">Issue using Add</Fit>
        </div>
        <Step w="w-[144px]">Attachment API</Step>
        <Step n="4." w="w-[456px]">Get Issue details and verify if added comment and</Step>
        <Step w="w-[339px]">attachment exists using Get Issue API</Step>
      </div>
      <Fit className="mt-[41px] h-6 w-[385px] text-[17.500px] font-bold leading-6 text-[#7030a0]">New Topics which are covered from above examples:</Fit>
      <div className="mt-[33px] pl-[45px] text-[17.500px] leading-[23px]">
        <Fit className="w-[535px]">How to Create Session Filter for Authentication in Rest Assured Automation</Fit>
        <Fit className="w-[530px]">in Introducing Path Parameters and Query Parameters together Single Test</Fit>
        <Fit className="w-[509px]">Sending Files as Attachments using Rest Assured with Multipart method</Fit>
        <Fit className="w-[535px]">Parsing complex Json and limiting Json response through Query Parameters</Fit>
        <Fit className="w-[462px]">Handling HTTPS Certification validation through Automated Code</Fit>
      </div>
    </div>
  );
}

function StatusBar() {
  return (
    <div className="flex h-[21px] shrink-0 items-center overflow-hidden border-t border-[#cfcfd1] bg-[#f3f2f4] pl-[7px] text-[11.500px] leading-4 text-[#333]">
      <Fit className="w-[52px]">Page 1 of 1</Fit>
      <Fit className="ml-[19px] w-[71px]">4 of 110 words</Fit>
      <Svg className="ml-[18px] h-3 w-[13px]" box="0 0 13 12"><path d="M6.500 1.500H.6v9H6.500M6.500 12V1.500q2-1 5.500-1V3M8 6l2 2 3-4M9 8.500v2h3V8" stroke="#666" /></Svg>
      <Svg className="ml-[839px] h-3 w-3" box="0 0 12 12"><path d="M.5 1H5l1 1 1-1h4.500v9H7l-1 1-1-1H.5ZM6 2v9M2 3.500h2M2 5.500h2M2 7.500h2M8 3.500h2M8 5.500h2M8 7.500h2" stroke="#666" /></Svg>
      <span className="ml-3 flex h-5 w-[36px] shrink-0 items-center justify-center bg-[#c8c8c9]"><Svg className="h-[13px] w-[14px]" box="0 0 14 13"><path d="M.5.500h13v12H.5ZM3 3h8M3 5h8M3 7h8M3 9h8" stroke="#666" /></Svg></span>
      <Svg className="ml-[11px] h-3 w-[13px]" box="0 0 13 12"><path d="M6 10.500H.5V.5h9V4M2.500 3h5M2.500 5h4M2.500 7h3" stroke="#777" /><circle cx="9.500" cy="8.500" r="3" fill="#777" /></Svg>
      <span className="ml-[16px] h-[2px] w-[6px] shrink-0 bg-[#555]" />
      <span className="ml-[3px] h-px w-[45px] shrink-0 bg-[#999]" /><span className="h-[11px] w-[5px] shrink-0 bg-[#666]" /><span className="h-px w-[45px] shrink-0 bg-[#999]" />
      <Svg className="ml-[2px] h-[7px] w-[7px]" box="0 0 7 7"><path d="M3.500 0v7M0 3.500h7" stroke="#555" strokeWidth="1.500" /></Svg>
      <Fit className="ml-[10px] w-[24px]">100%</Fit>
    </div>
  );
}

const Camtasia = ({ className }: P) => (
  <Svg className={className} box="0 0 22 22"><rect width="22" height="24" rx="2" fill="currentColor" /><path d="M17 8.500V5.500H9.500Q6 5.500 6 9v8q0 3 3 3h8" stroke="#fff" strokeWidth="3.400" /></Svg>
);

function InnerTaskbar() {
  return (
    <div className="flex h-[27px] shrink-0 items-start overflow-hidden border-t border-[#55626c] bg-[linear-gradient(90deg,#243640,#20303b_55%,#2a2f3a_70%,#20303b_85%,#1f2f3a)] text-white">
      <div className="h-[27px] w-[45px] shrink-0 pl-[14px] pt-[10px]"><Windows className="h-[17px] w-[17px]" /></div>
      <div className="flex h-[27px] w-[320px] shrink-0 bg-[#f2f2f3] pl-[11px] text-[#444]">
        <Svg className="mt-[9px] h-[18px] w-4" box="0 0 16 20"><circle cx="9.500" cy="6.500" r="5.500" stroke="#333" strokeWidth="1.400" /><path d="M6 11.500 0 19" stroke="#333" strokeWidth="1.500" /></Svg>
        <Fit className="ml-[10px] mt-[6px] w-[119px] text-[15px] leading-6">Type here to search</Fit>
      </div>
      <Svg className="ml-[16px] mt-[10px] h-4 w-[15px]" box="0 0 15 16"><ellipse cx="7.500" cy="8" rx="6.200" ry="6.800" stroke="#fff" strokeWidth="2" /></Svg>
      <TaskView className="ml-[29px] mt-[10px] h-[15px] w-4" />
      <Svg className="ml-[28px] mt-[6px] h-[22px] w-[22px]" box="0 0 22 22"><path d="M0 6h22v16H0Z" fill="#f4f4f4" /><path d="M7 6V4a4 3.500 0 0 1 8 0v2" stroke="#ddd" strokeWidth="1.500" /><path d="M6 9h4.500v5H6Z" fill="#f25022" /><path d="M11.500 9H16v5h-4.500Z" fill="#7fba00" /><path d="M6 15h4.500v5H6Z" fill="#00a4ef" /><path d="M11.500 15H16v5h-4.500Z" fill="#ffb900" /></Svg>
      <Svg className="ml-[24px] mt-[7px] h-5 w-[23px]" box="0 0 23 20"><path d="M0 6 11.500 0 23 6v14H0Z" fill="#0f7fd0" /><path d="m1 6.500 21 0-10.500 8Z" fill="#f1f6fa" /><path d="M0 7v13L11 14ZM23 7v13L12 14Z" fill="#2aa7ef" /></Svg>
      <Svg className="ml-[24px] mt-[7px] h-[20px] w-[19px]" box="0 0 19 20"><path d="M0 8.500C1 3 5 0 10 0c6 0 9 4 9 9v2.500H6C6.500 15 12 16.500 17.500 14v4c-7 4-16 1-16-7C1.500 8 4 5.500 7 4.500 4 5 1.500 6.500 0 8.500ZM6.500 8H13c0-4-5.500-4-6.500 0Z" fill="#0f7bd6" /></Svg>
      <Svg className="ml-[25px] mt-[6px] h-[22px] w-[22px]" box="0 0 22 22"><path d="M1 7q2-3 4-3l2-2q2 3 4 3l3-5q1 4 4 5l2-1q3 6 1.500 11Q19 22 11 22 0 21 1 7Z" fill="#ff7a2a" /><path d="M14 0q1 4 4 5l2-1q3 6 1.500 11L17 19q2-7-3-11Z" fill="#ffd23e" /><circle cx="11" cy="13" r="5" fill="#8a42d6" /><path d="M4 8q6-2 9 2-6-1-6 4-3-1-3-6Z" fill="#ff3b57" /></Svg>
      <Folder className="ml-[24px] mt-[9px] h-[20px] w-[22px]" />
      <div className="ml-[13px] h-[27px] w-[44px] shrink-0 bg-[#4a545f] pl-[11px] pt-[7px]">
        <div className="relative h-[19px] w-[22px] bg-[linear-gradient(#41a5ee,#2b7cd3_50%,#185abd)]">
          <span className="absolute left-0 top-1 h-[14px] w-3 bg-[#185abd] text-center text-[9px] font-bold leading-[14px]">W</span>
        </div>
      </div>
      <DarkEclipse className="ml-[12px] mt-[7px] h-[23px] w-[23px]" />
      <Postman className="ml-[23px] mt-[7px] h-[23px] w-[23px]" />
      <Chrome className="ml-[24px] mt-[7px] h-[23px] w-[21px]" />
      <Camtasia className="ml-[24px] mt-[6px] h-[22px] w-[22px] text-[#5fae00]" />
      <Camtasia className="ml-[23px] mt-[6px] h-[22px] w-[23px] text-[#f5554b]" />
      <Svg className="ml-[135px] mt-[13px] h-[8px] w-3" box="0 0 12 8"><path d="m.5 7 5.500-6 5.500 6" stroke="#fff" strokeWidth="1.400" /></Svg>
      <Svg className="ml-[16px] mt-[12px] h-[11px] w-[15px]" box="0 0 15 11"><path d="M2.500 0v3M0 3h5v2q0 1.500-2.500 2V10M6 2h7.500v8H4" stroke="#fff" strokeWidth="1.200" /><path d="M6.500 4h6v5h-6Z" fill="#fff" /></Svg>
      <Svg className="ml-[15px] mt-[11px] h-[13px] w-4" box="0 0 16 13"><path d="M.5 4.500h2l3-3v10l-3-3h-2ZM8 4.500q1.500 2 0 4M10.500 3q2.500 3.500 0 7M13 1.500q4 5 0 10" stroke="#fff" strokeWidth="1.100" /></Svg>
      <div className="ml-[12px] mt-[1px] w-[50px] shrink-0 text-[12px] leading-[17px]">
        <Fit className="ml-[5px] w-[39px]">4:41 PM</Fit>
        <Fit className="w-[49px]">2/29/2020</Fit>
      </div>
      <div className="relative -ml-[8px] w-[48px] shrink-0">
        <Svg className="ml-[23px] mt-[11px] h-[20px] w-[24px]" box="0 0 24 20"><path d="M0 0h16v13H6l-2 3v-3H0Z" fill="#fff" /><path d="M3 3.500h10M3 6.500h10M3 9.500h7" stroke="#26333d" /><circle cx="15.500" cy="14" r="7" fill="#39434d" stroke="#9aa0a6" /></Svg>
        <span className="absolute left-[35px] top-[16px] text-[12px] leading-[14px]">3</span>
        <Fit className="absolute left-0 top-[1px] w-[41px] text-[14px] leading-4 text-white/60">ûdemy</Fit>
      </div>
    </div>
  );
}

/* ---------- desktop taskbar ---------- */
const apps: { icon: ReactNode; open?: boolean; focus?: boolean; stack?: boolean }[] = [
  { icon: <EdgeIcon className="h-9 w-9" /> },
  { icon: <Folder className="h-7 w-8" />, stack: true },
  { icon: <StoreIcon className="h-[35px] w-[35px]" /> },
  { icon: <M365 className="h-[34px] w-8" /> },
  { icon: <Chrome className="h-9 w-9" />, focus: true },
  { icon: <PhoneLink className="h-8 w-9" /> },
  { icon: <Eclipse className="h-[33px] w-9" /> },
  { icon: <Postman className="h-8 w-8" /> },
  { icon: <Eclipse className="h-[33px] w-9" />, open: true },
  { icon: <Photos className="h-8 w-8" />, open: true },
  { icon: <Postman className="h-8 w-8" />, open: true },
  { icon: <NotepadPP className="h-[33px] w-[34px]" />, open: true },
  { icon: <Paint className="h-[34px] w-9" />, open: true },
  { icon: <Snip className="h-[34px] w-[34px]" />, open: true },
  { icon: <Notepad className="h-8 w-8" />, open: true },
];

function Taskbar() {
  return (
    <div className="flex h-[60px] shrink-0 items-center bg-[linear-gradient(90deg,#d6d7d8,#e0e1e1_8%,#ebebeb_16%,#ededed_96%,#dcdcdc)] text-black">
      <Windows className="ml-6 h-6 w-6" />
      <Svg className="ml-[42px] h-[34px] w-[35px]" box="0 0 35 34"><circle cx="20.500" cy="13.500" r="12" stroke="#000" strokeWidth="3" /><path d="M12 22 2 32" stroke="#000" strokeWidth="4" strokeLinecap="round" /></Svg>
      <TaskView className="ml-[43px] h-6 w-6" />
      <div className="ml-[27px] flex h-full">
        {apps.map((a, i) => (
          <div key={i} className={"flex h-full w-[75px] shrink-0 flex-col items-center " + (a.focus ? "bg-[#fafafa]" : "")}>
            <span className="flex grow items-center pt-[3px]">{a.icon}</span>
            <span className={"h-[3px] " + (a.focus ? "w-full bg-[#0078d7]" : a.stack ? "w-[61px] bg-[linear-gradient(90deg,#0078d7_80%,#69abe0_80%)]" : a.open ? "w-[61px] bg-[#0078d7]" : "w-0")} />
          </div>
        ))}
      </div>
      <Svg className="ml-[48px] h-[11px] w-[19px]" box="0 0 19 11"><path d="m.7 10.300 8.800-9 8.800 9" stroke="#111" strokeWidth="1.500" /></Svg>
      <Svg className="ml-[19px] h-6 w-[17px]" box="0 0 17 24"><rect x=".7" y="6.500" width="10" height="11.500" rx="2" stroke="#111" strokeWidth="1.300" /><path d="m11 11 4.500-3v8.500L11 13.500M2 2q6-2 12 0M2 22q6 2 12 0" stroke="#111" strokeWidth="1.200" /></Svg>
      <Svg className="ml-[15px] h-4 w-[25px]" box="0 0 25 16"><path d="M6 15.300a5 5 0 0 1-1-9.800 7 6 0 0 1 13-.5 5 5 0 0 1 2 10.300Z" fill="#999" stroke="#222" strokeWidth="1.200" /><path d="m6.500 15 8-6.500 6 1.500q3 2 1 5Z" fill="#e2e2e2" /></Svg>
      <Svg className="ml-[15px] h-6 w-4" box="0 0 16 24"><rect x="3" width="10" height="18" rx="1" fill="#000" /><path d="M.7 12v6.500q0 2 2 2h10.600q2 0 2-2V12M8 20.500V24M4.500 23.500h7" stroke="#000" strokeWidth="1.300" /></Svg>
      <Svg className="ml-[16px] h-6 w-[25px]" box="0 0 25 24"><path d="M13 21.500 1 20V3.500L23.500.7V12M6 9a5.500 5.500 0 0 1 9-1.500l1 1.500M16 5.500V9h-3.500M16 12a5.500 5.500 0 0 1-9 2L6 12.500M6 16v-3.500h3.500" stroke="#111" strokeWidth="1.300" /><circle cx="19" cy="18.500" r="5.500" fill="#2c72bc" /></Svg>
      <Svg className="ml-[12px] h-[14px] w-6" box="0 0 24 14"><path d="M.7.700h21v12.600h-21ZM23.300 4.500v5" stroke="#111" strokeWidth="1.300" /><path d="M2.500 2.500h8v9h-8Z" fill="#111" /></Svg>
      <Svg className="ml-[16px] h-[19px] w-[19px]" box="0 0 19 19"><path d="M1 19A18 18 0 0 1 18 1M5.500 19A13.500 13.500 0 0 1 18 6.500M10 19a9 9 0 0 1 8-8" stroke="#111" strokeWidth="1.200" /><circle cx="17" cy="17" r="1.700" fill="#111" /></Svg>
      <Svg className="ml-[13px] h-5 w-[23px]" box="0 0 23 20"><path d="M.7 6.500h3L9 1.500v17l-5.300-5h-3ZM12.500 6.500q2 3.500 0 7M16 4.500q3.500 5.500 0 11M19.500 2.500q5 7.500 0 15" stroke="#111" strokeWidth="1.300" /></Svg>
      <Fit className="ml-[17px] w-[34px] text-[17px]">ENG</Fit>
      <div className="ml-[20px] w-[94px] text-[17px] leading-[28px]">
        <Fit className="ml-[25px] w-[43px]">16:13</Fit>
        <Fit className="-ml-px w-[94px]">01-10-2023</Fit>
      </div>
      <div className="relative ml-[27px] mt-[11px]">
        <Svg className="h-9 w-9" box="0 0 36 36"><path d="M0 0h24v19H12v5l-5-5H0Z" fill="#000" /><path d="M5 5h14M5 9.500h14M5 14h9" stroke="#eee" strokeWidth="1.300" /><circle cx="23.500" cy="23.500" r="12" fill="#dcdcdc" fillOpacity=".86" stroke="#888" /></Svg>
        <span className="absolute left-[19px] top-[14px] text-[16px] font-semibold leading-5">2</span>
      </div>
      <span className="ml-[18px] h-full w-px bg-[#b5b5b5]" />
    </div>
  );
}

export default function App() {
  return (
    <div className="flex h-[1080px] w-[1920px] flex-col overflow-hidden bg-white font-['Open_Sans','Noto_Sans',sans-serif]">
      <TabStrip />
      <AddressBar />
      <Bookmarks />
      <SharingBar />
      <div className="flex min-h-0 grow flex-col bg-[#333333]">
        <div className="flex min-h-0 grow">
          <div className="w-[329px] shrink-0 border-l-[7px] border-t-[6px] border-[#27528d]" />
          <div className="flex w-[1261px] shrink-0 flex-col bg-[#2e2f31] pt-[38px]">
            <WordHeader />
            <div className="flex h-[602px] shrink-0 bg-[#e6e6e8] pl-[248px]"><Page /></div>
            <StatusBar />
            <InnerTaskbar />
          </div>
          <div className="grow border-r-[7px] border-t-[6px] border-[#27528d]" />
        </div>
        <div className="h-[7px] shrink-0 bg-[#265090]" />
      </div>
      <Taskbar />
    </div>
  );
}
